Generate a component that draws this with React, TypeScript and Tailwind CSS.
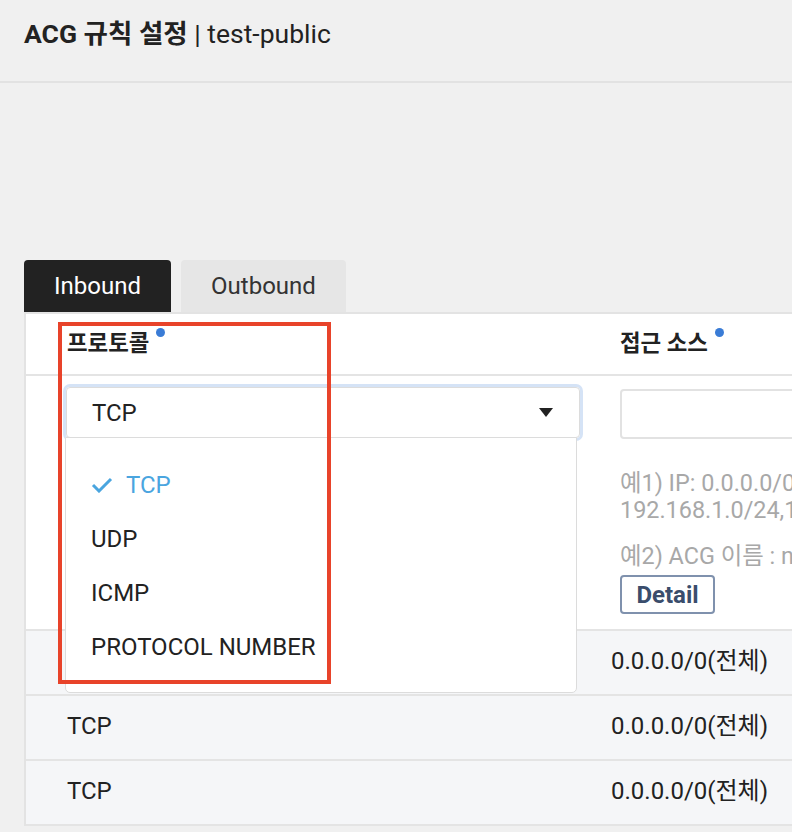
import React from "react";

const font = { fontFamily: 'Roboto, "Noto Sans CJK KR", sans-serif' };

function Dot() {
  return <span className="inline-block w-[9px] h-[9px] rounded-full bg-[#3a7cd6] ml-[7px] relative top-[-14px]" />;
}

export default function App() {
  return (
    <div className="w-[792px] h-[832px] overflow-hidden bg-[#f0f0f0] text-[#222]" style={font}>
      <header className="h-[83px] border-b-2 border-[#e2e2e2] px-6 pt-[17px]">
        <div className="text-[26.5px] leading-[34px] whitespace-nowrap">
          <span className="font-bold">ACG 규칙 설정</span>
          <span className="text-[#222]"> | test-public</span>
        </div>
      </header>

      <div className="pt-[177px]">
        <div className="flex gap-[10px] pl-6 h-[52px]">
          <div className="w-[147px] bg-[#222] text-white rounded-t-[4px] flex items-center justify-center text-[24px]">
            Inbound
          </div>
          <div className="w-[165px] bg-[#e6e6e6] text-[#333] rounded-t-[4px] flex items-center justify-center text-[24px]">
            Outbound
          </div>
        </div>

        <div className="ml-6 w-[900px] bg-white border-l-2 border-t-2 border-[#e3e3e3] relative">
          {/* header row */}
          <div className="h-[62px] border-b-2 border-[#e4e4e4] flex items-center">
            <div className="w-[594px] shrink-0 pl-[41px] text-[22.4px] font-bold">
              프로토콜<Dot />
            </div>
            <div className="text-[22.4px] font-bold whitespace-nowrap">
              접근 소스<Dot />
            </div>
          </div>

          {/* form row */}
          <div className="h-[255px] border-b-2 border-[#e4e4e4] flex">
            <div className="w-[594px] shrink-0 pl-[40px] pt-[11px]">
              <div className="w-[514px] h-[51px] border border-[#dcdcdc] rounded-[4px] shadow-[0_0_0_3px_#d5e3f6] flex items-center justify-between pl-[25px] pr-[26px] text-[24px]">
                <span>TCP</span>
                <svg width="14" height="9" viewBox="0 0 14 9">
                  <path d="M0 0 L14 0 L7 9 Z" fill="#222" />
                </svg>
              </div>
            </div>
            <div className="pt-[13px] shrink-0">
              <div className="w-[300px] h-[50px] border-2 border-[#e2e2e2] rounded-[4px]" />
              <div className="mt-[31px] text-[23.4px] leading-[27px] text-[#a8a8a8] whitespace-nowrap">
                <div>예1) IP: 0.0.0.0/0,</div>
                <div>192.168.1.0/24,192.168.1.1/32</div>
                <div className="mt-[19px]">예2) ACG 이름 : ncloud-default-acg</div>
              </div>
              <div className="mt-[5px] w-[95px] h-[39px] border-2 border-[#7f91ad] rounded-[4px] flex items-center justify-center text-[24px] font-bold text-[#3a4d6c]">
                Detail
              </div>
            </div>
          </div>

          {/* data rows */}
          {[0, 1, 2].map((i) => (
            <div key={i} className="h-[65px] border-b-2 border-[#e4e4e4] bg-[#f5f6f8] flex items-center pb-[4px] text-[24px]">
              <div className="w-[585px] shrink-0 pl-[41px]">TCP</div>
              <div className="whitespace-nowrap">0.0.0.0/0(전체)</div>
            </div>
          ))}

          {/* dropdown menu */}
          <div className="absolute left-[39px] top-[123px] w-[512px] h-[256px] bg-white border border-[#dcdcdc] rounded-b-[5px] pt-[20px] text-[24px]">
            <div className="h-[54px] flex items-center pl-[25px] text-[#4aa5df]">
              <svg width="22" height="16" viewBox="0 0 22 16" className="mr-[13px]">
                <path d="M2 8 L8 14 L20 2" fill="none" stroke="#4aa5df" strokeWidth="3" />
              </svg>
              TCP
            </div>
            <div className="h-[54px] flex items-center pl-[25px]">UDP</div>
            <div className="h-[54px] flex items-center pl-[25px]">ICMP</div>
            <div className="h-[54px] flex items-center pl-[25px]">PROTOCOL NUMBER</div>
          </div>

          {/* red highlight */}
          <div className="absolute left-[32px] top-[8px] w-[273px] h-[362px] border-4 border-[#e8432a]" />
        </div>
      </div>
    </div>
  );
}
